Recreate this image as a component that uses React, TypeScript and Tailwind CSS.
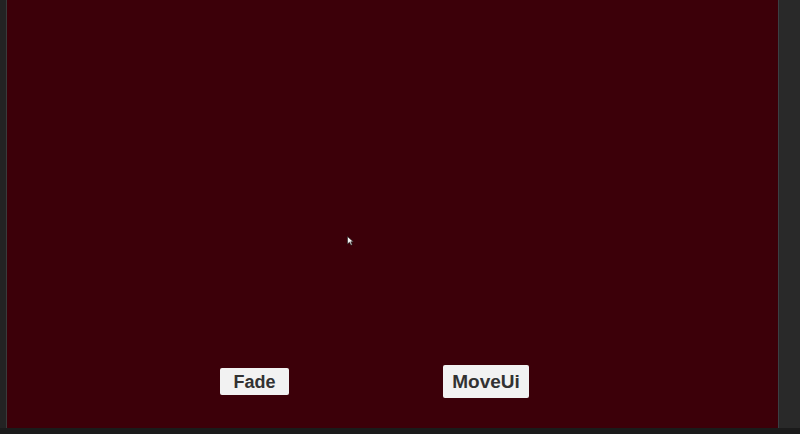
import React from "react";

export default function App() {
  return (
    <div className="w-[800px] h-[434px] flex flex-col bg-[#1b1b1b] overflow-hidden" style={{ fontFamily: '"Liberation Sans", Arial, sans-serif' }}>
      <div className="flex h-[428px]">
        <div className="w-[7px] bg-[#232323] border-r border-[#3a3a3a]" />
        <div className="relative flex-1 bg-[#3c0009] flex flex-col justify-end pb-[30px]">
          <div className="flex items-center h-[33px]">
            <button className="ml-[213px] w-[69px] h-[27px] bg-[#f2f2f2] rounded-[2px] text-[#323232] text-[18px] font-bold leading-none">
              Fade
            </button>
            <button className="ml-[154px] w-[86px] h-[33px] bg-[#f2f2f2] rounded-[2px] text-[#323232] text-[19px] font-bold leading-none">
              MoveUi
            </button>
          </div>
          <svg className="absolute left-[340px] top-[236px]" width="7" height="10" viewBox="0 0 7 10">
            <path d="M0.5 0.5 L0.5 8 L2.5 6.2 L4 9.2 L5.2 8.6 L3.8 5.8 L6.3 5.8 Z" fill="#f4f4f4" stroke="#222" strokeWidth="0.6" />
          </svg>
        </div>
        <div className="w-[22px] bg-[#292929] border-l border-[#3b3f44]" />
      </div>
      <div className="flex-1 bg-[#1b1b1b]" />
    </div>
  );
}
